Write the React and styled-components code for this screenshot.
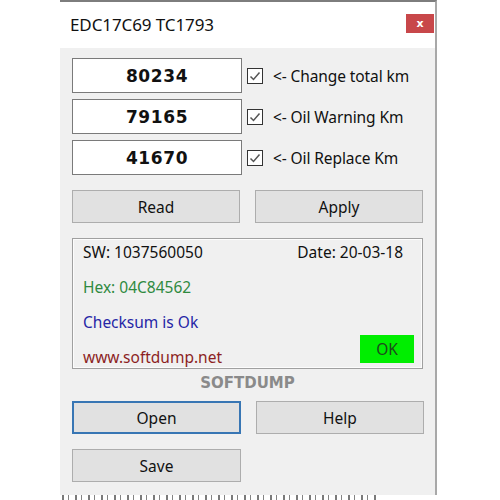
import React from "react";
import styled, { createGlobalStyle } from "styled-components";

const Global = createGlobalStyle`
  html, body { margin: 0; padding: 0; background: #ffffff; }
  body { font-family: "Noto Sans", "Open Sans", sans-serif; width: 500px; height: 500px; overflow: hidden; }
`;

const Win = styled.div`
  margin-left: 60px;
  width: 377px;
  height: 495px;
  box-sizing: border-box;
  border-top: 2px solid #7d7d7d;
  border-right: 2px solid #a8a8a8;
  display: flex;
  flex-direction: column;
  background: #f0f0f0;
`;

const TitleBar = styled.div`
  height: 46px;
  background: #ffffff;
  display: flex;
  align-items: flex-start;
  justify-content: space-between;
  padding: 0 1px 0 10px;
  flex-shrink: 0;
`;

const Title = styled.div`
  font-size: 17px;
  color: #111;
  margin-top: 11px;
  letter-spacing: -0.1px;
`;

const Close = styled.div`
  width: 28px;
  height: 19px;
  margin-top: 12px;
  background: #c8474a;
  color: #fff;
  font-family: "DejaVu Sans", sans-serif;
  font-size: 11px;
  font-weight: bold;
  display: flex;
  align-items: center;
  justify-content: center;
`;

const Body = styled.div`
  padding: 10px 0 0 12px;
  display: flex;
  flex-direction: column;
`;

const Fields = styled.div`
  display: flex;
  flex-direction: column;
  gap: 6px;
`;

const FieldRow = styled.div`
  display: flex;
  align-items: center;
`;

const NumBox = styled.div`
  width: 170px;
  height: 35px;
  box-sizing: border-box;
  border: 1px solid #7a7a7a;
  background: #fff;
  display: flex;
  align-items: center;
  justify-content: center;
  font-family: "DejaVu Sans", sans-serif;
  font-weight: bold;
  font-size: 17px;
  letter-spacing: 0.6px;
  color: #111;
`;

const Check = styled.div`
  width: 16px;
  height: 16px;
  box-sizing: border-box;
  border: 1px solid #333;
  background: #fff;
  margin-left: 5px;
  display: flex;
  align-items: center;
  justify-content: center;
`;

const CheckLabel = styled.span`
  margin-left: 10px;
  font-size: 15.5px;
  color: #111;
  letter-spacing: -0.1px;
`;

const ButtonRow = styled.div`
  display: flex;
  gap: 15px;
  margin-top: ${(p) => p.$top || 0}px;
`;

const Btn = styled.div`
  width: ${(p) => (p.$w ? p.$w : 168)}px;
  height: 33px;
  box-sizing: border-box;
  border: ${(p) => (p.$focus ? "2px solid #3876b4" : "1px solid #adadad")};
  background: #e1e1e1;
  display: flex;
  align-items: center;
  justify-content: center;
  font-size: 15.5px;
  color: #111;
`;

const InfoBox = styled.div`
  margin-top: 15px;
  width: 351px;
  height: 131px;
  box-sizing: border-box;
  border: 1px solid #a0a0a0;
  box-shadow: inset 0 0 0 1px #fcfcfc;
  padding: 2px 8px 0 10px;
  display: grid;
  grid-template-columns: 1fr auto;
  grid-template-rows: repeat(4, 22px);
  row-gap: 13px;
  font-size: 15.5px;
`;

const InfoText = styled.div`
  display: flex;
  align-items: center;
  color: ${(p) => p.$color || "#111"};
  justify-self: ${(p) => (p.$end ? "end" : "start")};
  margin-right: ${(p) => (p.$end ? 11 : 0)}px;
  grid-column: ${(p) => p.$col || "auto"};
  grid-row: ${(p) => p.$row || "auto"};
`;

const OkBadge = styled.div`
  grid-column: 2;
  grid-row: 3 / 5;
  align-self: end;
  justify-self: end;
  margin-bottom: 5px;
  width: 54px;
  height: 28px;
  background: #00ee00;
  display: flex;
  align-items: center;
  justify-content: center;
  color: #1d4a1d;
  font-size: 15.5px;
`;

const Brand = styled.div`
  width: 351px;
  height: 32px;
  line-height: 28px;
  text-align: center;
  font-family: "DejaVu Sans", sans-serif;
  font-weight: bold;
  font-size: 15px;
  color: #8a8a8a;
`;

const Crop = styled.div`
  margin-left: 62px;
  width: 318px;
  height: 5px;
  background: repeating-linear-gradient(
    90deg,
    #222 0 2px,
    transparent 2px 6px,
    #333 6px 7px,
    transparent 7px 13px
  );
  opacity: 0.6;
`;

const CheckMark = () => (
  <svg width="14" height="14" viewBox="0 0 14 14">
    <polyline points="2.5,7.5 5.5,10.5 11.5,3.5" fill="none" stroke="#555" strokeWidth="1.5" />
  </svg>
);

const fields = [
  { v: "80234", l: "<- Change total km" },
  { v: "79165", l: "<- Oil Warning Km" },
  { v: "41670", l: "<- Oil Replace Km" },
];

export default function App() {
  return (
    <>
      <Global />
      <Win>
        <TitleBar>
          <Title>EDC17C69 TC1793</Title>
          <Close>x</Close>
        </TitleBar>
        <Body>
          <Fields>
            {fields.map((f) => (
              <FieldRow key={f.v}>
                <NumBox>{f.v}</NumBox>
                <Check>
                  <CheckMark />
                </Check>
                <CheckLabel>{f.l}</CheckLabel>
              </FieldRow>
            ))}
          </Fields>
          <ButtonRow $top={15}>
            <Btn>Read</Btn>
            <Btn>Apply</Btn>
          </ButtonRow>
          <InfoBox>
            <InfoText>SW: 1037560050</InfoText>
            <InfoText $end>Date: 20-03-18</InfoText>
            <InfoText $color="#2f8a3f" $col="1" $row="2">Hex: 04C84562</InfoText>
            <InfoText $color="#2626a6" $col="1" $row="3">Checksum is Ok</InfoText>
            <InfoText $color="#8c1f1f" $col="1" $row="4">www.softdump.net</InfoText>
            <OkBadge>OK</OkBadge>
          </InfoBox>
          <Brand>SOFTDUMP</Brand>
          <ButtonRow>
            <Btn $focus $w={169}>Open</Btn>
            <Btn>Help</Btn>
          </ButtonRow>
          <ButtonRow $top={15}>
            <Btn $w={169}>Save</Btn>
          </ButtonRow>
        </Body>
      </Win>
      <Crop />
    </>
  );
}
